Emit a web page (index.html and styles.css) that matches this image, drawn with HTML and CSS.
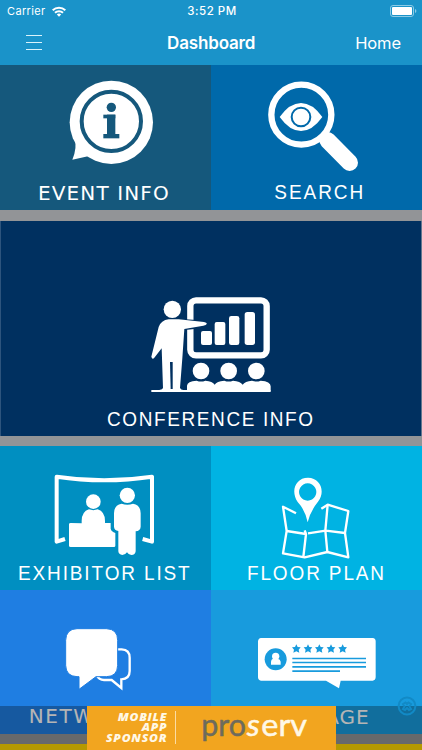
FILE: index.html
```html
<!DOCTYPE html>
<html lang="en">
<head>
    <meta charset="UTF-8">
    <meta name="viewport" content="width=device-width, initial-scale=1.0">
    <title>Dashboard</title>
    <link rel="stylesheet" href="styles.css">
</head>
<body>
    <header>
        <div class="status-bar">
            <div class="carrier">
                <span>Carrier</span>
                <svg width="14" height="11" viewBox="0 0 14 11">
                    <g fill="none" stroke="#fff" stroke-width="2">
                        <path d="M.7 4.2a9 9 0 0 1 12.6 0"/>
                        <path d="M3 6.8a5.7 5.7 0 0 1 8 0"/>
                    </g>
                    <path d="M4.8 8.6a3.2 3.2 0 0 1 4.4 0L7 10.8z" fill="#fff"/>
                </svg>
            </div>
            <div class="time">3:52 PM</div>
            <svg class="battery" width="27" height="12" viewBox="0 0 27 12">
                <rect x=".5" y=".5" width="23" height="11" rx="2.5" fill="none" stroke="#8ccbe6"/>
                <rect x="2" y="2" width="20" height="8" rx="1" fill="#fff"/>
                <path d="M25 4v4q1.4-.6 1.4-2T25 4" fill="#8ccbe6"/>
            </svg>
        </div>
        <nav>
            <div class="menu-btn"><span></span><span></span><span></span></div>
            <h1>Dashboard</h1>
            <a>Home</a>
        </nav>
    </header>
    <main>
        <div class="row">
            <svg class="tile event" viewBox="0 15 633 435">
                <circle cx="334" cy="187" r="125"/>
                <path d="M224 235Q232 264 217 299L264 289L300 250z"/>
                <circle class="line" cx="334" cy="184" r="89" stroke-width="12"/>
                <g class="cut">
                    <circle cx="334" cy="142" r="14"/>
                    <rect x="310" y="164" width="36" height="11"/>
                    <rect x="321" y="164" width="25" height="70"/>
                    <rect x="310" y="222" width="48" height="13"/>
                </g>
                <text class="dejavu" x="114" y="419" textLength="392">EVENT INFO</text>
            </svg>
            <svg class="tile search" viewBox="0 15 633 435">
                <circle cx="271" cy="164" r="90" fill="none" stroke="#fff" stroke-width="19"/>
                <path d="M350 241L416 308" stroke="#fff" stroke-width="50" stroke-linecap="round"/>
                <path d="M206 171Q236 129 270 129Q304 129 334 171Q304 213 270 213Q236 213 206 171"/>
                <circle class="line" cx="270" cy="171" r="28" stroke-width="6"/>
                <text x="190" y="418" textLength="290">SEARCH</text>
            </svg>
        </div>
        <svg class="tile conference" viewBox="-270 -192 1266 645">
            <rect x="301" y="46" width="229" height="165" rx="17" fill="none" stroke="#fff" stroke-width="19"/>
            <path class="cut" d="M285 103L320 105L320 131L285 135z"/>
            <rect x="333" y="138" width="33" height="42" rx="6"/>
            <rect x="374" y="111" width="32" height="69" rx="6"/>
            <rect x="417" y="93" width="31" height="87" rx="7"/>
            <rect x="464" y="81" width="31" height="99" rx="8"/>
            <circle cx="247" cy="73" r="26"/>
            <path d="M236 103L266 103L342 111Q352 113 350 117Q349 120 340 122L283 132L277 220L270 309Q273 315 280 315H542V321H184V315H208Q218 314 219 309L215 190L193 218Q187 225 184 215L206 126Q213 106 236 103z"/>
            <path class="cut" d="M240 231H248L248 312H242z"/>
            <circle cx="333" cy="258" r="25"/>
            <circle cx="416" cy="258" r="25"/>
            <circle cx="499" cy="258" r="25"/>
            <path d="M291 317V302Q292 289 320 287Q333 292 346 287Q368 288 374 299Q380 288 403 287Q416 292 429 287Q451 288 458 299Q465 288 486 287Q499 292 512 287Q542 289 542 304V317z"/>
            <text x="51" y="422" textLength="672">CONFERENCE INFO</text>
        </svg>
        <div class="row">
            <svg class="tile exhibitor" viewBox="0 48 633 432">
                <path d="M195 327L170 335V140Q312 162 456 140V335L428 327" fill="none" stroke="#fff" stroke-width="12" stroke-linejoin="round"/>
                <circle cx="280" cy="215" r="22"/>
                <path d="M245 280V273Q245 245 267 238Q280 243 293 238Q315 245 315 273V279H332V296Q334 305 346 309V347Q346 351 342 351H212Q207 351 207 347V283Q207 279 212 279z"/>
                <circle cx="382" cy="196" r="23"/>
                <path d="M365 221Q382 227 399 221Q422 225 422 250V290Q421 303 407 304V364Q406 375 394 375Q386 375 381 367Q376 375 367 375Q356 374 355 364V303Q343 301 342 290V250Q342 225 365 221z"/>
                <text x="54" y="449" textLength="560">EXHIBITOR LIST</text>
            </svg>
            <svg class="tile floor" viewBox="0 48 633 432">
                <path fill-rule="evenodd" d="M290 277Q282 239 260 216C238 184 253 143 291 143C328 143 344 184 322 214Q296 247 290 277zM290 160a26 26 0 1 0 .1 0z"/>
                <g fill="none" stroke="#fff" stroke-width="7" stroke-linejoin="round">
                    <path d="M255 250L216 230L227 303L216 370L281 382L349 366L412 382L402 309L412 243L350 224L331 236"/>
                    <path d="M227 303L285 312L277 381M285 312L281 301M291 310L344 302L402 309M350 224L343 302L349 366"/>
                </g>
                <text x="108" y="449" textLength="447">FLOOR PLAN</text>
            </svg>
        </div>
        <div class="row">
            <svg class="tile network" viewBox="0 0 633 432">
                <path d="M340 178H365Q389 179 389 203V243Q389 267 364 268V294L335 270H312Q297 270 290 256" fill="none" stroke="#fff" stroke-width="7"/>
                <path stroke="#1f7ee2" stroke-width="3" d="M231 116H319Q353 117 353 151V226Q352 260 319 260H288L237 298V260H231Q198 259 197 226V151Q198 117 231 116z"/>
                <text class="dejavu" x="86" y="399" textLength="460">NETWORKING</text>
            </svg>
            <svg class="tile message" viewBox="0 0 633 432">
                <path d="M150 144H485Q494 145 494 154V262Q493 272 485 272H389L384 295L345 272H150Q141 271 141 262V154Q142 145 150 144z"/>
                <g class="cut">
                    <circle cx="194" cy="208" r="33"/>
                    <path id="star" d="M256 163L260 171L269 172L263 179L265 188L256 184L247 188L249 179L243 172L252 171z"/>
                    <use href="#star" x="35"/>
                    <use href="#star" x="69"/>
                    <use href="#star" x="104"/>
                    <use href="#star" x="139"/>
                    <path d="M244 203H465V208H244zM244 215H465V220H244zM244 228H465V233H244zM244 241H387V246H244z"/>
                </g>
                <circle cx="194" cy="199" r="11"/>
                <path d="M180 224V215Q181 206 188 206H200Q208 207 209 215V224z"/>
                <text class="dejavu" x="164" y="401" textLength="309">MESSAGE</text>
            </svg>
        </div>
        <div class="next-row"></div>
    </main>
    <div class="overlay">
        <svg class="banner" viewBox="20 18 747 132">
            <g class="sponsor">
                <text x="112" y="63" textLength="149" lengthAdjust="spacingAndGlyphs">MOBILE</text>
                <text x="184" y="94" textLength="77" lengthAdjust="spacingAndGlyphs">APP</text>
                <text x="77" y="127" textLength="184" lengthAdjust="spacingAndGlyphs">SPONSOR</text>
            </g>
            <rect x="284" y="33" width="2" height="99"/>
            <g class="logo">
                <text x="363" y="107" textLength="134" lengthAdjust="spacingAndGlyphs" class="grey">pro</text>
                <text x="499" y="107" textLength="39" lengthAdjust="spacingAndGlyphs" class="slant">s</text>
                <text x="543" y="107" textLength="137" lengthAdjust="spacingAndGlyphs">erv</text>
            </g>
        </svg>
    </div>
    <svg class="close-btn" width="20" height="20" viewBox="0 0 20 20">
        <circle cx="10" cy="10" r="8.4"/>
        <path d="M6 8l2.5-1.5L10 8l1.5-1.5L14 8l-1.5 2.5L14 13l-2 1-2-2-2 2-2-1 1.5-2.5z"/>
    </svg>
</body>
</html>
```
FILE: styles.css
```css
body {
    font-family: Inter, "Liberation Sans", sans-serif;
    margin: 0;
    height: 750px;
    position: relative;
    overflow: hidden;
    background-color: #929497;
    color: white;
}
header {
    height: 65px;
    background-color: #1a93c9;
}
.status-bar {
    height: 22px;
    padding: 0 5px 0 7px;
    display: grid;
    grid-template-columns: 1fr auto 1fr;
    align-items: center;
    font-size: 11px;
}
.carrier {
    display: flex;
    align-items: center;
    gap: 6px;
    letter-spacing: 0.35px;
}
.time {
    font-size: 11.5px;
    font-weight: 500;
    letter-spacing: 0.5px;
}
.battery {
    justify-self: end;
}
nav {
    height: 41px;
    padding: 0 21px 0 26px;
    display: grid;
    grid-template-columns: 141px 1fr auto;
    align-items: center;
}
h1 {
    margin: 0;
    font-size: 17px;
    font-weight: 600;
    letter-spacing: -0.15px;
}
nav a {
    font-size: 16.5px;
    letter-spacing: -0.1px;
}
.menu-btn {
    width: 16px;
    display: flex;
    flex-direction: column;
    gap: 6px;
}
.menu-btn span {
    height: 1px;
    background: #d9f3fb;
}
main {
    display: flex;
    flex-direction: column;
}
.row {
    display: flex;
}
.tile {
    display: block;
    width: 211px;
    height: 144px;
    fill: white;
    background-color: var(--tile);
}
.tile text {
    font-family: "Liberation Sans", Arial, sans-serif;
    font-size: 62px;
    transform-box: fill-box;
    transform-origin: left;
    transform: scaleX(0.92);
}
.tile .dejavu {
    font-family: "DejaVu Sans", sans-serif;
    font-size: 60px;
    transform: none;
}
.cut {
    fill: var(--tile);
}
.line {
    fill: none;
    stroke: var(--tile);
}
.event, .search {
    height: 145px;
}
.event {
    --tile: #15587c;
}
.search {
    --tile: #0069aa;
}
.conference {
    --tile: #003060;
    width: 422px;
    height: 215px;
    margin: 11px 0 10px;
    box-shadow: inset 1px 0 #2d547d, inset -1px 0 #63778f;
}
.exhibitor {
    --tile: #008fc1;
}
.floor {
    --tile: #00b3e3;
}
.network {
    --tile: #1f7ee2;
}
.message {
    --tile: #189bdd;
}
.next-row {
    height: 20px;
    margin-top: 10px;
    background-color: #ffd800;
}
.overlay {
    position: absolute;
    left: 0;
    right: 0;
    bottom: 0;
    height: 44px;
    display: flex;
    justify-content: center;
    background: rgba(0, 0, 0, 0.29);
}
.banner {
    width: 249px;
    height: 44px;
    background-color: #f2a51f;
    fill: #fff8e6;
}
.sponsor text {
    font: italic 800 33px "Open Sans", sans-serif;
    letter-spacing: 2px;
}
.logo text {
    font-family: Lato, sans-serif;
    font-size: 94px;
    stroke: #fff8e6;
    stroke-width: 1.5;
}
.logo .grey {
    fill: #6d6b5d;
    stroke: #6d6b5d;
}
.logo .slant {
    font-style: italic;
}
.close-btn {
    position: absolute;
    left: 397px;
    top: 696px;
    fill: none;
    stroke: #128ac6;
    stroke-width: 2;
}
```
